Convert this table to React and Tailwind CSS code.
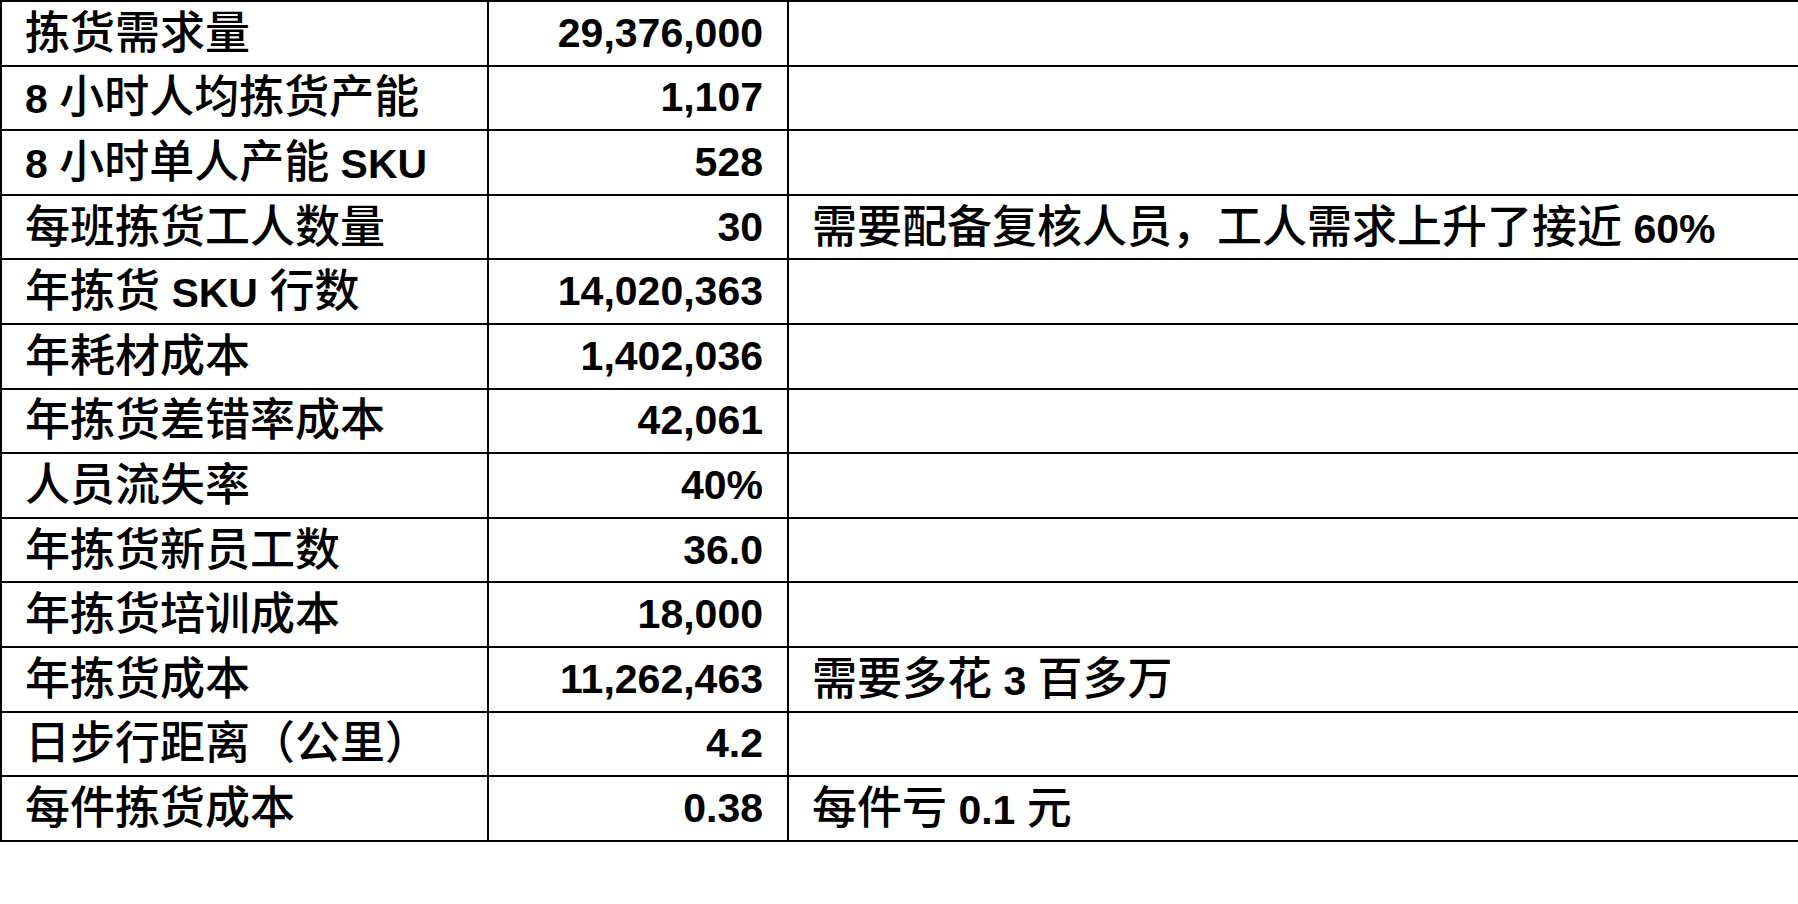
const L = ({ children }) => <span className="text-[41px] font-bold">{children}</span>;

const rows = [
  { label: '拣货需求量', value: '29,376,000' },
  { label: <><L>8 </L>小时人均拣货产能</>, value: '1,107' },
  { label: <><L>8 </L>小时单人产能<L> SKU</L></>, value: '528' },
  { label: '每班拣货工人数量', value: '30', note: <>需要配备复核人员，工人需求上升了接近<L> 60%</L></> },
  { label: <>年拣货<L> SKU </L>行数</>, value: '14,020,363' },
  { label: '年耗材成本', value: '1,402,036' },
  { label: '年拣货差错率成本', value: '42,061' },
  { label: '人员流失率', value: '40%' },
  { label: '年拣货新员工数', value: '36.0' },
  { label: '年拣货培训成本', value: '18,000' },
  { label: '年拣货成本', value: '11,262,463', note: <>需要多花<L> 3 </L>百多万</> },
  { label: '日步行距离（公里）', value: '4.2' },
  { label: '每件拣货成本', value: '0.38', note: <>每件亏<L> 0.1 </L>元</> },
];

export default function App() {
  return (
    <div className="w-[1798px] h-[904px] bg-white overflow-hidden font-['Liberation_Sans','Noto_Sans_CJK_SC',sans-serif] text-black">
      <div className="border-t-2 border-l-2 border-black">
        {rows.map((row, i) => (
          <div key={i} className="flex h-[64.6px] border-b-2 border-black">
            <div className="w-[487px] shrink-0 border-r-2 border-black flex items-center pl-[23px] text-[45px] font-medium leading-none whitespace-pre">
              <span>{row.label}</span>
            </div>
            <div className="w-[300px] shrink-0 border-r-2 border-black flex items-center justify-end pr-[24px] text-[41px] font-bold leading-none">
              {row.value}
            </div>
            <div className="flex-1 flex items-center pl-[23px] text-[45px] font-medium leading-none whitespace-pre">
              <span>{row.note}</span>
            </div>
          </div>
        ))}
      </div>
    </div>
  );
}
